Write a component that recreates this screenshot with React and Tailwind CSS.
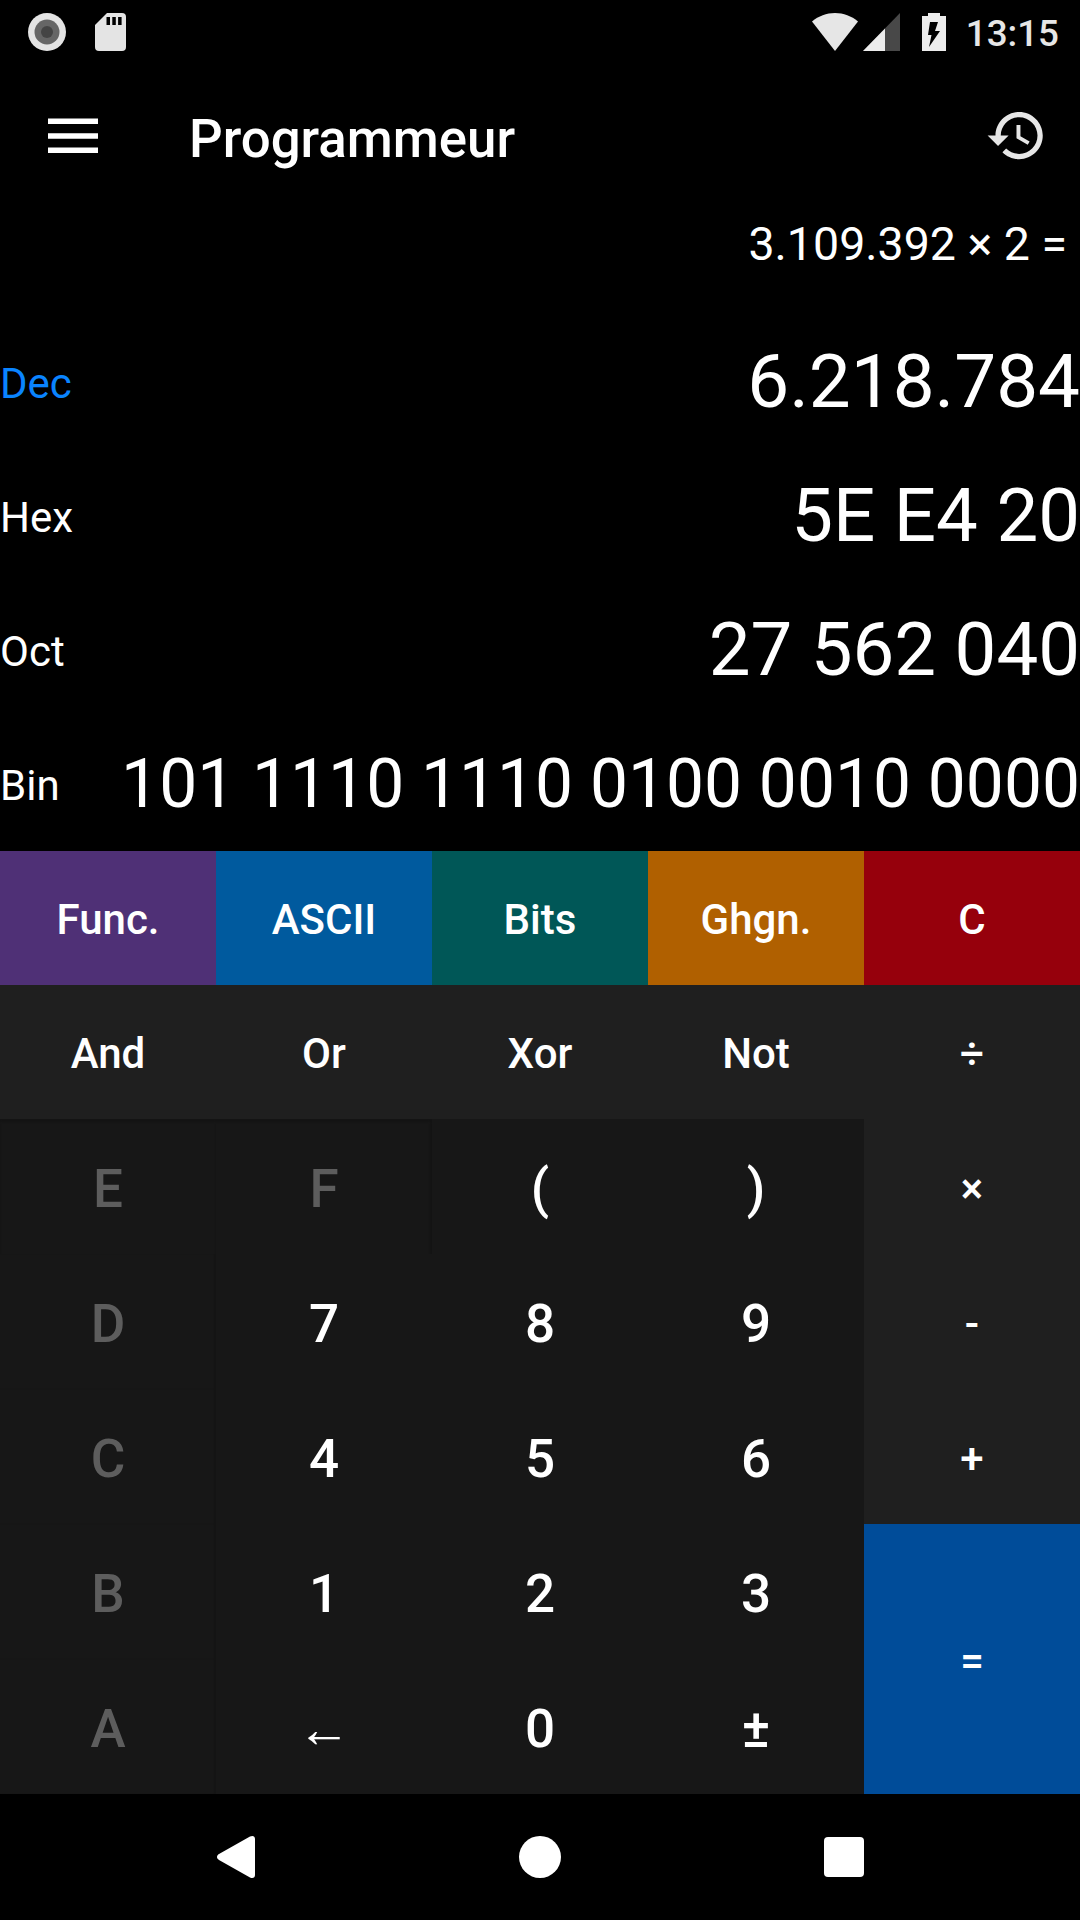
import React, { useState } from 'react'

const bases = [
    { id: 'dec', label: 'Dec', value: '6.218.784', size: 'text-[74.6px]' },
    { id: 'hex', label: 'Hex', value: '5E E4 20', size: 'text-[74.4px]' },
    { id: 'oct', label: 'Oct', value: '27 562 040', size: 'text-[74.4px]' },
    { id: 'bin', label: 'Bin', value: '101 1110 1110 0100 0010 0000', size: 'text-[67.7px] pt-[1px]' },
]

const fn = 'text-[42px] pt-[3px]'
const op = 'text-[42px] pt-[3px] bg-[#1f1f1f]'
const opLow = 'text-[42px] pt-[5px] bg-[#1f1f1f]'
const num = 'text-[53px] pt-[5px] bg-[#171717]'
const off = 'text-[53px] pt-[5px] bg-[#171717] text-[#5d5d5d]'
const offEdge = `${off} shadow-[inset_-2px_0_1px_#141414]`

const keys = [
    { label: 'Func.', style: `${fn} bg-[#4f3076]` },
    { label: 'ASCII', style: `${fn} bg-[#005a9e]` },
    { label: 'Bits', style: `${fn} bg-[#005757]` },
    { label: 'Ghgn.', style: `${fn} bg-[#b06000]` },
    { label: 'C', style: `${fn} bg-[#96000c]` },
    { label: 'And', style: op },
    { label: 'Or', style: op },
    { label: 'Xor', style: op },
    { label: 'Not', style: op },
    { label: '÷', style: op },
    { label: 'E', style: `${off} shadow-[inset_0_3px_2px_#141414]`, disabled: true },
    { label: 'F', style: `${off} shadow-[inset_-2px_3px_2px_#141414]`, disabled: true },
    { label: '(', style: num },
    { label: ')', style: num },
    { label: '×', style: opLow },
    { label: 'D', style: offEdge, disabled: true },
    { label: '7', style: num },
    { label: '8', style: num },
    { label: '9', style: num },
    { label: '-', style: opLow },
    { label: 'C', style: offEdge, disabled: true },
    { label: '4', style: num },
    { label: '5', style: num },
    { label: '6', style: num },
    { label: '+', style: opLow },
    { label: 'B', style: offEdge, disabled: true },
    { label: '1', style: num },
    { label: '2', style: num },
    { label: '3', style: num },
    { label: '=', style: 'text-[42px] pt-[3px] bg-[#004c99] row-span-2' },
    { label: 'A', style: offEdge, disabled: true },
    { label: '←', style: num },
    { label: '0', style: num },
    { label: '±', style: num },
]

const StatusBar = () => (
    <div className="h-[63px] flex items-center justify-between pl-7 pr-[21px] text-[#e6e6e6]">
        <div className="flex items-center gap-[29px]">
            <svg width="38" height="38" viewBox="0 0 38 38">
                <circle cx="19" cy="19" r="19" fill="#e4e4e4" />
                <circle cx="19" cy="19" r="12.5" fill="#666" />
                <circle cx="19" cy="19" r="6" fill="#444" />
            </svg>
            <svg width="31" height="38" viewBox="0 0 31 38">
                <path d="M12 0h15a4 4 0 0 1 4 4v30a4 4 0 0 1-4 4H4a4 4 0 0 1-4-4V12z" fill="#e4e4e4" />
                <path d="M11.500 4h3.500v8h-3.500zM17.300 4h3.500v8h-3.500zM23.100 4h3.500v8h-3.500z" fill="#000" />
            </svg>
        </div>
        <div className="flex items-center">
            <svg width="46" height="38" viewBox="0 0 46 38">
                <path d="M0 8.500C6.500 3 14.500 0 23 0s16.500 3 23 8.500L23 38z" fill="#e6e6e6" />
            </svg>
            <svg className="ml-[5px]" width="37" height="38" viewBox="0 0 37 38">
                <path d="M37 0v38H0z" fill="#484848" />
                <path d="M22 15.500V38H0z" fill="#ececec" />
            </svg>
            <svg className="ml-[22px]" width="24" height="38" viewBox="0 0 24 38">
                <path d="M6 0h12v3h6v35H0V3h6z" fill="#ececec" />
                <path d="M8 9h8l-3 9h5L7 34l2.500-12H6z" fill="#000" />
            </svg>
            <span className="ml-5 pt-[5px] text-[36.75px] font-medium leading-none">13:15</span>
        </div>
    </div>
)

const Header = () => (
    <div className="h-[147px] flex items-center">
        <button className="ml-12 mb-[2px]" aria-label="Menu">
            <svg width="50" height="36" viewBox="0 0 50 36" fill="#fff">
                <path d="M0 .5h50v5.500H0zM0 15.200h50v5.500H0zM0 29.500h50V35H0z" />
            </svg>
        </button>
        <h1 className="ml-[91px] pt-[5px] text-[52.8px] font-medium leading-none">Programmeur</h1>
        <button className="ml-auto mr-8 mb-[2px]" aria-label="History">
            <svg width="63" height="63" viewBox="0 0 24 24" fill="#e6e6e6">
                <path d="M13 3c-4.970 0-9 4.030-9 9H1l3.890 3.890.07.14L9 12H6c0-3.870 3.130-7 7-7s7 3.130 7 7-3.130 7-7 7c-1.930 0-3.680-.79-4.940-2.060l-1.420 1.420C8.270 19.990 10.510 21 13 21c4.970 0 9-4.030 9-9s-4.030-9-9-9zm-1 5v5l4.280 2.540.72-1.210-3.500-2.080V8H12z" />
            </svg>
        </button>
    </div>
)

const NavBar = () => (
    <div className="h-[126px] flex items-center justify-between pl-[217px] pr-[216px]">
        <svg width="38" height="44" viewBox="0 0 38 44" fill="#fff">
            <path d="M2 19 33 1.500c3-1.500 5 0 5 2.500v36c0 2.500-2 4-5 2.500L2 25c-2.700-1.500-2.700-4.500 0-6z" />
        </svg>
        <div className="w-[42px] h-[42px] rounded-full bg-white" />
        <div className="w-10 h-10 rounded-[4px] bg-white" />
    </div>
)

const App = () => {
    const [active, setActive] = useState('dec')

    return (
        <div className="w-[1080px] h-[1920px] bg-black text-white font-['Roboto',sans-serif] overflow-hidden flex flex-col">
            <StatusBar />
            <Header />

            <div className="h-[105px] pt-px pr-[13px] text-right text-[46.5px] leading-[66px]">3.109.392 × 2 =</div>

            <div className="grid grid-rows-[repeat(4,134px)]">
                {bases.map((base) => (
                    <div
                        key={base.id}
                        onClick={() => setActive(base.id)}
                        className="flex items-center justify-between whitespace-nowrap"
                    >
                        <span className={`pt-[3px] text-[42px] leading-none ${active === base.id ? 'text-[#0a84ff]' : 'text-white'}`}>
                            {base.label}
                        </span>
                        <span className={`${base.size} leading-none`}>{base.value}</span>
                    </div>
                ))}
            </div>

            <div className="grid grid-cols-5 grid-rows-[134px_134px_repeat(5,135px)] font-medium">
                {keys.map((key, i) => (
                    <button
                        key={i}
                        disabled={key.disabled}
                        className={`flex items-center justify-center leading-none ${key.style}`}
                    >
                        {key.label}
                    </button>
                ))}
            </div>

            <NavBar />
        </div>
    )
}

export default App
